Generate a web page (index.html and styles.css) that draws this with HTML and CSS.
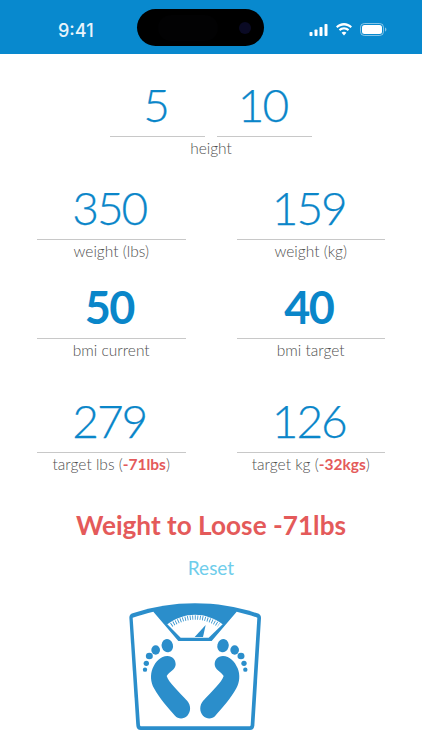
FILE: index.html
```html
<!DOCTYPE html>
<html lang="en">
<head>
<meta charset="utf-8">
<title>BMI</title>
<link rel="stylesheet" href="styles.css">
</head>
<body>
<header class="status">
  <span class="time">9:41</span>
  <div class="island"><span class="sensor"></span><span class="camera"></span></div>
  <div class="status-icons">
    <svg class="signal" viewBox="0 0 18 12" width="19" height="12"><rect x="0" y="8" width="3" height="4" rx=".8"/><rect x="5" y="5.500" width="3" height="6.500" rx=".8"/><rect x="10" y="3" width="3" height="9" rx=".8"/><rect x="15" y="0" width="3" height="12" rx=".8"/></svg>
    <svg class="wifi" viewBox="0 0 18 13" width="18" height="13"><path d="M9 2.400c2.500 0 4.800 1 6.500 2.600L17 3.400C14.900 1.300 12.100 0 9 0S3.100 1.300 1 3.400L2.500 5C4.200 3.400 6.500 2.400 9 2.400z"/><path d="M9 6.500c1.400 0 2.700.5 3.700 1.500l1.500-1.600C12.800 5 11 4.200 9 4.200S5.200 5 3.800 6.400L5.300 8C6.300 7 7.600 6.500 9 6.500z"/><path d="M9 8.800c-1 0-1.800.4-2.400 1L9 12.500l2.400-2.700c-.6-.6-1.400-1-2.400-1z"/></svg>
    <svg class="battery" viewBox="0 0 27 13" width="27" height="13"><rect x=".5" y=".5" width="23" height="12" rx="3.800" fill="none" stroke="#fff" stroke-opacity=".5"/><rect x="2" y="2" width="20" height="9" rx="2.500"/><path d="M25 4.500v4c.8-.3 1.400-1.100 1.400-2s-.6-1.700-1.400-2z" fill-opacity=".5"/></svg>
  </div>
</header>
<main class="page">
  <section class="height-block">
    <div class="height-row">
      <div class="value">5</div>
      <div class="value">10</div>
    </div>
    <div class="label">height</div>
  </section>

  <section class="pair pair-weight">
    <div class="field"><div class="value">350</div><div class="label">weight (lbs)</div></div>
    <div class="field"><div class="value">159</div><div class="label">weight (kg)</div></div>
  </section>

  <section class="pair pair-bmi">
    <div class="field"><div class="value bold">50</div><div class="label">bmi current</div></div>
    <div class="field"><div class="value bold">40</div><div class="label">bmi target</div></div>
  </section>

  <section class="pair pair-target">
    <div class="field"><div class="value">279</div><div class="label">target lbs (<b>-71lbs</b>)</div></div>
    <div class="field"><div class="value">126</div><div class="label">target kg (<b>-32kgs</b>)</div></div>
  </section>

  <h1 class="headline">Weight to Loose -71lbs</h1>
  <div class="reset">Reset</div>

  <svg class="scale" viewBox="0 0 510 450" width="170" height="150">
    <path class="body" d="M58 68C58 60 62 57 68 55C130 35 190 25 255 25C320 25 380 35 442 55C448 57 453 60 453 68L433 392C432 400 428 405 420 405H92C84 405 80 400 79 392Z"/>
    <path class="inner" d="M68 68C90 60 110 55 130 50L205 138H305L380 50C400 55 420 60 442 68L422 390C422 392 420 394 418 394H94C92 394 90 392 90 390Z"/>
    <path class="inner" d="M172 88C225 50 285 50 338 88L296 128H212Z"/>
    <path class="ticks" d="M184 90C230 60 280 60 326 90"/>
    <path class="ink" d="M254 126L287 90L279 126Z"/>
    <g class="ink">
      <g id="foot">
        <ellipse cx="172" cy="152" rx="17" ry="20" transform="rotate(-15 172 152)"/>
        <ellipse cx="137" cy="165" rx="13" ry="14"/>
        <ellipse cx="118" cy="183" rx="10.500" ry="10"/>
        <circle cx="109" cy="205" r="8"/>
        <circle cx="105" cy="224" r="6.500"/>
        <path d="M172 183C188 183 197 194 197 208C197 224 178 230 170 243C176 262 204 288 232 318C243 331 243 350 232 362C220 374 204 372 195 362C175 340 150 312 132 280C122 262 120 240 128 220C136 200 152 183 172 183Z"/>
      </g>
      <use href="#foot" transform="translate(511 0) scale(-1 1)"/>
    </g>
  </svg>
</main>
</body>
</html>
```
FILE: styles.css
```css
* { box-sizing: border-box; }
html, body { margin: 0; padding: 0; }
body {
  width: 422px;
  height: 750px;
  overflow: hidden;
  background: #fff;
  font-family: Lato, "Liberation Sans", sans-serif;
}
.status {
  height: 54px;
  background: #0889ce;
  display: flex;
  align-items: flex-start;
  color: #fff;
}
.time {
  width: 137px;
  padding: 21px 0 0 58px;
  font-family: Inter, sans-serif;
  font-size: 18px;
  line-height: 20px;
  font-weight: 500;
  color: #e8f4fb;
}
.island {
  width: 127px;
  height: 37px;
  margin-top: 9px;
  border-radius: 19px;
  background: #000;
  display: flex;
  align-items: center;
  justify-content: flex-end;
  gap: 21px;
  padding-right: 13px;
}
.sensor {
  width: 60px;
  height: 26px;
  border-radius: 13px;
  background: #020203;
}
.camera {
  width: 12px;
  height: 12px;
  border-radius: 50%;
  background: #0a0a24;
}
.status-icons {
  display: flex;
  align-items: center;
  gap: 7px;
  margin: 23px 0 0 45px;
}
.status-icons svg { fill: #fff; display: block; }
.page {
  display: flex;
  flex-direction: column;
  align-items: center;
}
.height-block {
  width: 202px;
  margin: 22px 0 0 0;
}
.height-row {
  display: flex;
  gap: 12px;
}
.height-row .value { flex: 1; }
.value {
  height: 61px;
  line-height: 58px;
  padding-right: 4px;
  font-size: 46px;
  letter-spacing: -2px;
  font-weight: 300;
  -webkit-text-stroke: 0.25px #0a86c9;
  color: #0a86c9;
  text-align: center;
  border-bottom: 1px solid #c8c8c8;
}
.value.bold {
  font-size: 45px;
  letter-spacing: -1.5px;
  font-weight: 700;
  -webkit-text-stroke: 0;
}
.label {
  text-align: center;
  font-size: 15.5px;
  line-height: 22px;
  font-weight: 300;
  color: #4f4f4f;
}
.label b { font-weight: 700; color: #e45a5a; }
.pair {
  display: flex;
  gap: 51px;
  width: 348px;
}
.field { flex: 1; }
.pair-weight { margin-top: 20px; }
.pair-bmi { margin-top: 16px; }
.pair-target { margin-top: 31px; }
.headline {
  margin: 30px 0 0;
  font-size: 26.2px;
  line-height: 40px;
  font-weight: 700;
  color: #e45a5a;
}
.reset {
  margin-top: 8px;
  font-size: 19px;
  line-height: 30px;
  font-weight: 400;
  color: #6fcdeb;
}
.scale {
  align-self: flex-start;
  margin: 12px 0 0 110px;
  display: block;
}
.body, .ink { fill: #2b8ecb; }
.inner { fill: #fff; }
.ticks {
  fill: none;
  stroke: #2b8ecb;
  stroke-width: 13;
  stroke-dasharray: 2.500 5;
}
```
